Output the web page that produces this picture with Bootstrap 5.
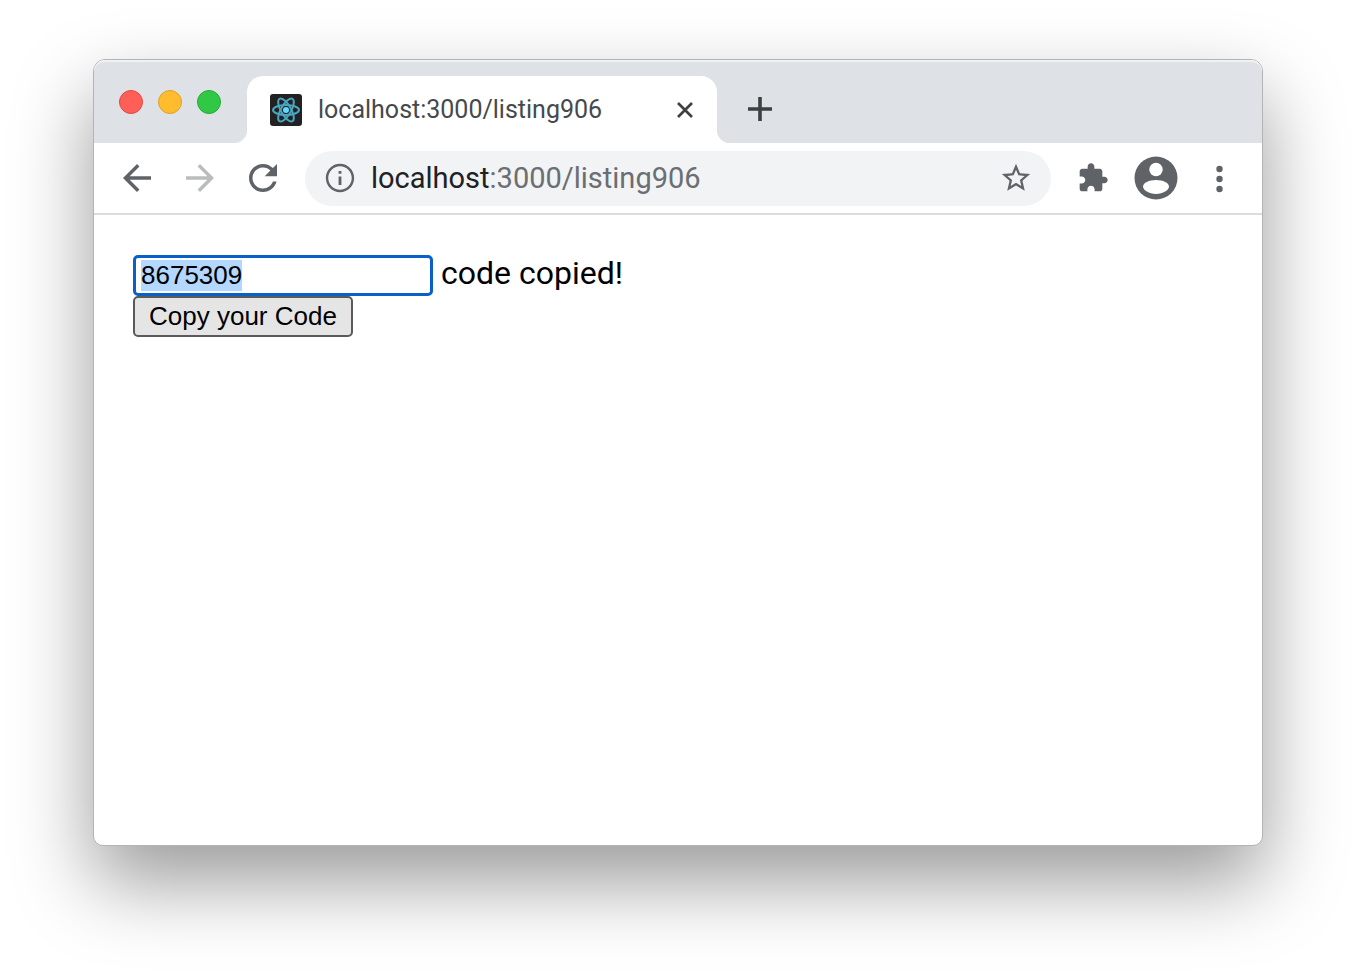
<!DOCTYPE html>
<html lang="en">
<head>
<meta charset="utf-8">
<meta name="viewport" content="width=device-width, initial-scale=1">
<title>localhost:3000/listing906</title>
<link href="https://cdn.jsdelivr.net/npm/bootstrap@5.3.0/dist/css/bootstrap.min.css" rel="stylesheet">
<style>
  body { font-family: Roboto, "Liberation Sans", sans-serif; background: #fff; }
  .desktop { padding: 59px 93px 130px; }
  .browser { border: 1px solid #b4b4b4; border-radius: 12px 12px 10px 10px; background: #fff;
    box-shadow: 0 36px 80px rgba(0, 0, 0, .4); }
  .tab-strip { background: #dee1e6; height: 83px; border-top: 2px solid #f0f1f3; border-radius: 11px 11px 0 0; }
  .lights { gap: 15px; padding: 28px 26px 0 25px; }
  .light { width: 24px; height: 24px; border: 1px solid; border-radius: 50%; }
  .light-close { background: #ff5f57; border-color: #e2463f; }
  .light-min { background: #febc2e; border-color: #e0a028; }
  .light-zoom { background: #31c845; border-color: #24ab35; }
  .page-tab { width: 470px; height: 67px; background: #fff; border-radius: 16px 16px 0 0; padding: 0 20px 0 23px; }
  .page-tab::before, .page-tab::after { content: ""; position: absolute; bottom: 0; width: 14px; height: 14px; }
  .page-tab::before { right: 100%; background: radial-gradient(circle at 0 0, transparent 14px, #fff 15px); }
  .page-tab::after { left: 100%; background: radial-gradient(circle at 100% 0, transparent 14px, #fff 15px); }
  .tab-title { font-size: 25px; line-height: 32px; color: #45494d; }
  .tool { border: 0; padding: 0; background: none; color: #5f6368; display: flex; align-items: center; justify-content: center; width: 42px; height: 44px; }
  .tool:disabled { color: #babcbe; }
  .tool-small { width: 24px; height: 32px; color: #3c4043; }
  .new-tab { margin: 0 0 18px 31px; }
  .toolbar { height: 72px; gap: 21px; padding: 0 22px; border-bottom: 2px solid #dadce0; }
  .omnibox { height: 55px; background: #f1f3f4; padding: 0 18px; gap: 14px; }
  .omnibox .tool { width: 34px; height: 34px; }
  .address { border: 0; font-size: 29px; line-height: 36px; color: #6b6e72; }
  .address b { font-weight: 400; color: #202124; }
  .content { padding: 40px 39px; color: #000; }
  .code-label { font-size: 32px; line-height: 36px; }
  .code-input { width: 300px; height: 41px; border: 3px solid #0a60cb; border-radius: 5px; padding: 0 5px;
    outline: 0; background: #fff; color: #000; font: 26px/29px "Liberation Sans", Arial, sans-serif; }
  .code-input::selection { background: #b3d7ff; color: #000; }
  .copy-btn { height: 41px; border: 2px solid #5a5a5a; border-radius: 5px; background: #e5e5e5; color: #000;
    padding: 0 14px; font: 26px/29px "Liberation Sans", Arial, sans-serif; }
</style>
</head>
<body>
<div class="desktop min-vh-100 d-flex">
  <div class="browser flex-grow-1 d-flex flex-column">
    <header class="tab-strip d-flex">
      <div class="lights d-flex">
        <span class="light light-close"></span>
        <span class="light light-min"></span>
        <span class="light light-zoom"></span>
      </div>
      <div class="page-tab position-relative d-flex align-items-center align-self-end">
        <svg width="32" height="32" viewBox="0 0 32 32" fill="none" stroke="#4aa5c0" stroke-width="2" aria-hidden="true">
          <rect width="32" height="32" rx="3" fill="#222" stroke="none"/>
          <ellipse cx="16" cy="16" rx="13" ry="5"/>
          <ellipse cx="16" cy="16" rx="13" ry="5" transform="rotate(60 16 16)"/>
          <ellipse cx="16" cy="16" rx="13" ry="5" transform="rotate(120 16 16)"/>
          <circle cx="16" cy="16" r="3" fill="#61dafb" stroke="none"/>
        </svg>
        <span class="tab-title ms-3 me-auto">localhost:3000/listing906</span>
        <button class="tool tool-small" type="button" aria-label="Close tab">
          <svg width="24" height="24" viewBox="0 0 24 24" stroke="currentColor" stroke-width="2.700"><path d="M5 5l14 14M19 5l-14 14"/></svg>
        </button>
      </div>
      <button class="tool tool-small new-tab align-self-end" type="button" aria-label="New tab">
        <svg class="flex-shrink-0" width="24" height="24" viewBox="0 0 24 24" stroke="currentColor" stroke-width="3.600"><path d="M0 12h24M12 0v24"/></svg>
      </button>
    </header>
    <nav class="toolbar d-flex align-items-center" aria-label="Browser toolbar">
      <button class="tool" type="button" aria-label="Back"><svg width="42" height="42" viewBox="0 0 24 24" fill="currentColor"><path d="M20 11H7.830l5.590-5.590L12 4l-8 8 8 8 1.410-1.410L7.830 13H20v-2z"/></svg></button>
      <button class="tool" type="button" aria-label="Forward" disabled><svg width="42" height="42" viewBox="0 0 24 24" fill="currentColor"><path d="M12 4l-1.410 1.410L16.170 11H4v2h12.170l-5.580 5.590L12 20l8-8z"/></svg></button>
      <button class="tool" type="button" aria-label="Reload"><svg width="42" height="42" viewBox="0 0 24 24" fill="currentColor"><path d="M17.650 6.350C16.200 4.900 14.210 4 12 4c-4.420 0-7.990 3.580-7.990 8s3.570 8 7.990 8c3.730 0 6.840-2.550 7.730-6h-2.080c-.820 2.330-3.040 4-5.650 4-3.310 0-6-2.690-6-6s2.690-6 6-6c1.660 0 3.140.690 4.220 1.780L13 11h7V4l-2.350 2.350z"/></svg></button>
      <div class="omnibox flex-grow-1 d-flex align-items-center rounded-pill">
        <button class="tool" type="button" aria-label="Site information"><svg width="34" height="34" viewBox="0 0 24 24" fill="currentColor"><path d="M11 7h2v2h-2zm0 4h2v6h-2zm1-9C6.480 2 2 6.480 2 12s4.480 10 10 10 10-4.480 10-10S17.520 2 12 2zm0 18.300c-4.580 0-8.300-3.720-8.300-8.300s3.720-8.300 8.300-8.300 8.300 3.720 8.300 8.300-3.720 8.300-8.300 8.300z"/></svg></button>
        <span class="address me-auto"><b>localhost</b>:3000/listing906</span>
        <button class="tool" type="button" aria-label="Bookmark this page"><svg width="34" height="34" viewBox="0 0 24 24" fill="currentColor"><path d="M22 9.240l-7.190-.620L12 2 9.190 8.630 2 9.240l5.460 4.730L5.820 21 12 17.270 18.180 21l-1.630-7.030L22 9.240zM12 15.400l-3.760 2.270 1-4.280-3.320-2.880 4.380-.380L12 6.100l1.710 4.040 4.380.380-3.320 2.880 1 4.280L12 15.400z"/></svg></button>
      </div>
      <button class="tool" type="button" aria-label="Extensions"><svg width="32" height="32" viewBox="0 0 24 24" fill="currentColor"><path d="M20.500 11H19V7c0-1.100-.900-2-2-2h-4V3.500C13 2.120 11.880 1 10.500 1S8 2.120 8 3.500V5H4c-1.100 0-1.990.900-1.990 2v3.800H3.500c1.490 0 2.700 1.210 2.700 2.700s-1.210 2.700-2.700 2.700H2V20c0 1.100.900 2 2 2h3.800v-1.500c0-1.490 1.210-2.700 2.700-2.700 1.490 0 2.700 1.210 2.700 2.700V22H17c1.100 0 2-.900 2-2v-4h1.500c1.380 0 2.500-1.120 2.500-2.500S21.880 11 20.500 11z"/></svg></button>
      <button class="tool" type="button" aria-label="Profile"><svg class="flex-shrink-0" width="44" height="44" viewBox="0 0 44 44"><circle cx="22" cy="22" r="21.500" fill="currentColor"/><circle cx="22" cy="13.500" r="6.700" fill="#fff"/><path d="M9 30.500c0-3.600 6-6.500 13-6.500s13 2.900 13 6.500-6 7.500-13 7.500-13-3.900-13-7.500z" fill="#fff"/></svg></button>
      <button class="tool" type="button" aria-label="Menu"><svg width="42" height="42" viewBox="0 0 42 42" fill="currentColor"><circle cx="21.500" cy="12" r="3.200"/><circle cx="21.500" cy="22" r="3.200"/><circle cx="21.500" cy="32" r="3.200"/></svg></button>
    </nav>
    <main class="content flex-grow-1">
      <div class="d-flex align-items-start gap-2">
        <input class="code-input" id="code" type="text" value="8675309" aria-describedby="status" aria-label="Your code" autofocus>
        <label class="code-label" id="status" for="code">code copied!</label>
      </div>
      <button class="copy-btn d-block" id="copy" type="button">Copy your Code</button>
    </main>
  </div>
</div>
<script src="https://cdn.jsdelivr.net/npm/bootstrap@5.3.0/dist/js/bootstrap.bundle.min.js"></script>
<script>
  const code = document.getElementById('code');
  const selectCode = () => { code.focus(); code.select(); };
  document.getElementById('copy').addEventListener('click', selectCode);
  selectCode();
</script>
</body>
</html>
